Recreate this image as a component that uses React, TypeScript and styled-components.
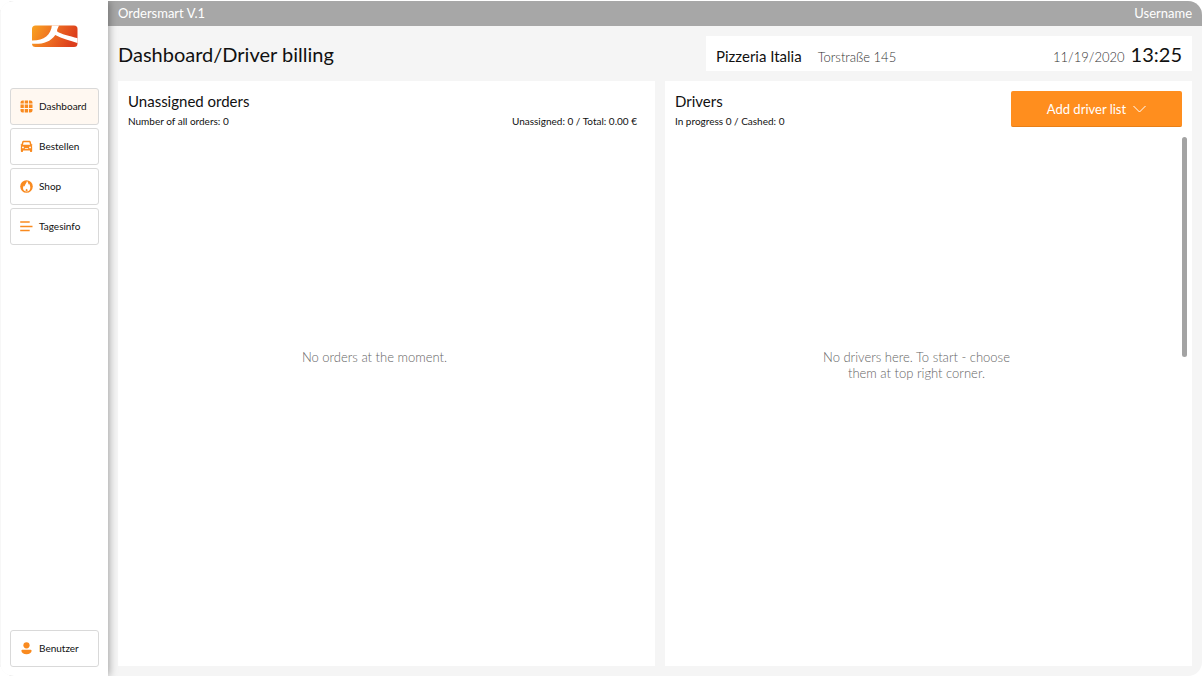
import React from "react";
import styled, { createGlobalStyle } from "styled-components";

const GlobalStyle = createGlobalStyle`
  * { box-sizing: border-box; }
  html, body, #root { height: 100%; }
  body {
    margin: 0;
    background: #fff;
    color: #111;
    font-family: Lato, "Liberation Sans", sans-serif;
  }
  h1, h2, p { margin: 0; font-weight: 400; }
  button { font: inherit; cursor: pointer; }
`;

const Shell = styled.div`
  display: flex;
  min-height: calc(100vh - 2px);
  margin: 1px 0;
  border-radius: 14px;
  overflow: hidden;
  background: #f5f5f5;
`;

const Sidebar = styled.aside`
  display: flex;
  flex-direction: column;
  flex: 0 0 108px;
  padding: 24px 9px 9px;
  background: #fff;
  border-left: 1px solid #f7f7f7;
  box-shadow: 1px 0 8px rgba(0, 0, 0, 0.36);
  z-index: 1;
`;

const Logo = styled.svg`
  display: block;
  align-self: center;
  width: 46px;
  height: 23px;
  margin-bottom: 40px;
`;

const Menu = styled.nav`
  display: flex;
  flex: 1;
  flex-direction: column;
  gap: 3px;
`;

const MenuButton = styled.button<{ $active?: boolean; $last?: boolean }>`
  display: flex;
  align-items: center;
  gap: 6px;
  width: 100%;
  height: 37px;
  margin-top: ${(p) => (p.$last ? "auto" : "0")};
  padding: 0 8px 0 9px;
  border: 1px solid #d9d9d9;
  border-radius: 3px;
  background: ${(p) => (p.$active ? "#fff8f1" : "#fff")};
  color: #111;
  font-size: 10px;
  line-height: 13px;
`;

const MenuIcon = styled.svg`
  flex: none;
  width: 13px;
  height: 13px;
  color: #f98a1f;
`;

const Main = styled.div`
  display: flex;
  flex: 1;
  flex-direction: column;
  min-width: 0;
`;

const TopBar = styled.header`
  display: flex;
  align-items: center;
  justify-content: space-between;
  height: 25px;
  padding: 0 10px;
  background: #a7a7a7;
  color: #fff;
  font-size: 13px;
  line-height: 15px;
`;

const Content = styled.main`
  display: flex;
  flex: 1;
  flex-direction: column;
  gap: 10px;
  padding: 10px;
`;

const Heading = styled.div`
  display: grid;
  grid-template-columns: 588fr 486fr;
  align-items: center;
`;

const Title = styled.h1`
  font-size: 20px;
  line-height: 24px;
`;

const StoreCard = styled.div`
  display: flex;
  align-items: baseline;
  height: 35px;
  padding: 5px 10px;
  background: #fff;
  line-height: 26px;
`;

const StoreName = styled.span`
  margin-right: 16px;
  font-size: 15px;
`;

const Muted = styled.span`
  color: #333;
  font-size: 13px;
  font-weight: 300;
`;

const Clock = styled.time`
  margin-left: 6px;
  font-size: 20px;
`;

const DateText = styled(Muted).attrs({ as: "time" })`
  margin-left: auto;
`;

const Panels = styled.div`
  display: grid;
  flex: 1;
  grid-template-columns: 537fr 527fr;
  gap: 10px;
`;

const Panel = styled.section`
  display: flex;
  flex-direction: column;
  padding: 10px;
  background: #fff;
`;

const PanelHead = styled.div`
  display: flex;
  align-items: flex-start;
  justify-content: space-between;
  height: 46px;
`;

const PanelTitle = styled.h2`
  font-size: 15px;
  line-height: 20px;
`;

const Small = styled.p`
  font-size: 10px;
  line-height: 20px;
`;

const Totals = styled(Small)`
  padding: 20px 8px 0 0;
`;

const AddButton = styled.button`
  display: flex;
  align-items: center;
  justify-content: center;
  gap: 7px;
  width: 171px;
  height: 36px;
  padding: 0;
  border: 0;
  border-bottom: 1px solid #e87f17;
  border-radius: 2px;
  background: #ff8e1e;
  color: #fff;
  font-size: 13px;
  line-height: 16px;
`;

const Chevron = styled.svg`
  width: 13px;
  height: 8px;
`;

const PanelBody = styled.div`
  display: flex;
  flex: 1;
`;

const Empty = styled.div`
  display: flex;
  flex: 1;
  justify-content: center;
  padding: 212px 24px 0 0;
`;

const EmptyText = styled.p`
  max-width: 200px;
  color: #666;
  font-size: 13px;
  font-weight: 300;
  line-height: 16px;
  text-align: center;
`;

const ScrollThumb = styled.div`
  flex: none;
  width: 5px;
  height: 220px;
  margin-right: -5px;
  border-radius: 3px;
  background: #a3a3a3;
`;

const GridIcon = () => (
  <MenuIcon viewBox="0.500 0.500 13 13" fill="currentColor" aria-hidden="true">
    <path d="M3 1h1.300v3H1V3a2 2 0 0 1 2-2zM5.200 1h3.400v3H5.200zM9.500 1H11a2 2 0 0 1 2 2v1H9.500zM1 5h3.300v3.600H1zM5.200 5h3.400v3.600H5.200zM9.500 5H13v3.600H9.500zM1 9.600h3.300V13H3a2 2 0 0 1-2-2zM5.200 9.600h3.400V13H5.200zM9.500 9.600H13V11a2 2 0 0 1-2 2H9.500z" />
  </MenuIcon>
);

const CarIcon = () => (
  <MenuIcon viewBox="0 0 14 14" fill="currentColor" aria-hidden="true">
    <path
      fillRule="evenodd"
      d="M4 .9h6c.9 0 1.500.5 1.700 1.300l.6 2.500h.9v1.200h-.5c.3.500.4 1 .4 1.700v4.500c0 .5-.3.800-.8.800h-.8c-.5 0-.8-.3-.8-.8v-.9H3.300v.9c0 .5-.3.800-.8.800h-.8c-.5 0-.8-.3-.8-.8V7.600c0-.7.100-1.200.4-1.700H.8V4.700h.9l.6-2.500C2.500 1.400 3.100.9 4 .9zM3.900 2.500 3.200 5h7.600l-.7-2.500zM3.200 7a1 1 0 1 0 0 2 1 1 0 0 0 0-2zM10.800 7a1 1 0 1 0 0 2 1 1 0 0 0 0-2zM5.200 8.900v.8h3.600v-.8z"
    />
  </MenuIcon>
);

const FlameIcon = () => (
  <MenuIcon viewBox="0.500 0.500 13 13" aria-hidden="true">
    <circle cx="7" cy="7" r="6.300" fill="currentColor" />
    <path
      fill="#fff"
      d="M7.400 1.600c1 1.100 1.600 2.200 1.500 3.500.4-.1.600-.4.700-.8.900 1.300 1.200 2.600 1.200 3.900 0 2.300-1.500 3.900-3.700 3.900S3.500 10.700 3.500 8.600c0-1.100.4-2 1-2.700.1.500.3.800.7 1C5.200 4.700 7.300 4 7.400 1.600z"
    />
    <path fill="currentColor" d="M7.200 9.300c.6.500.9.900.9 1.400 0 .6-.4 1-1 1s-1-.4-1-.9c0-.6.6-.8 1.100-1.500z" />
  </MenuIcon>
);

const LinesIcon = () => (
  <MenuIcon viewBox="0.500 0.500 13 13" fill="none" stroke="currentColor" strokeWidth="1.300" aria-hidden="true">
    <path d="M.700 2.500h9.500M.700 7h12.300M.700 11h9.500" />
  </MenuIcon>
);

const UserIcon = () => (
  <MenuIcon viewBox="0.500 0.500 13 13" fill="currentColor" aria-hidden="true">
    <circle cx="7" cy="3.800" r="3.100" />
    <path d="M3.200 8.300h7.600c.9 0 1.400.5 1.300 1.300-.2 2-2.200 3.200-5.100 3.200S2.100 11.600 1.900 9.600c-.1-.8.400-1.300 1.300-1.300z" />
  </MenuIcon>
);

export default function App() {
  return (
    <>
      <GlobalStyle />
      <Shell>
        <Sidebar>
          <Logo viewBox="0 0 46 23" role="img" aria-label="Ordersmart">
            <defs>
              <linearGradient id="brand" x1="0" y1="0" x2="1" y2="0.250">
                <stop offset="0" stopColor="#f9a420" />
                <stop offset="0.500" stopColor="#ee6f22" />
                <stop offset="1" stopColor="#dc3e1c" />
              </linearGradient>
              <clipPath id="tile">
                <rect x="0" y="0.500" width="45.500" height="21.500" rx="3.500" />
              </clipPath>
            </defs>
            <g clipPath="url(#tile)">
              <rect width="46" height="23" fill="url(#brand)" />
              <path
                fill="#fff"
                d="M-1 15.500C12 16 19.500 10 20-1h7.500c-1 3.500-3 5.500-2.300 7.500C29 9 37 11 46 13.200v5C38 15.500 30 14 23.300 10 18 17.500 10 19.500-1 18.700z"
              />
            </g>
          </Logo>
          <Menu aria-label="Main">
            <MenuButton $active aria-current="page"><GridIcon />Dashboard</MenuButton>
            <MenuButton><CarIcon />Bestellen</MenuButton>
            <MenuButton><FlameIcon />Shop</MenuButton>
            <MenuButton><LinesIcon />Tagesinfo</MenuButton>
            <MenuButton $last><UserIcon />Benutzer</MenuButton>
          </Menu>
        </Sidebar>
        <Main>
          <TopBar>
            <span>Ordersmart V.1</span>
            <span>Username</span>
          </TopBar>
          <Content>
            <Heading>
              <Title>Dashboard/Driver billing</Title>
              <StoreCard>
                <StoreName>Pizzeria Italia</StoreName>
                <Muted>Torstraße 145</Muted>
                <DateText>11/19/2020</DateText>
                <Clock>13:25</Clock>
              </StoreCard>
            </Heading>
            <Panels>
              <Panel>
                <PanelHead>
                  <div>
                    <PanelTitle>Unassigned orders</PanelTitle>
                    <Small>Number of all orders: 0</Small>
                  </div>
                  <Totals>Unassigned: 0 / Total: 0.00 €</Totals>
                </PanelHead>
                <PanelBody>
                  <Empty>
                    <EmptyText>No orders at the moment.</EmptyText>
                  </Empty>
                </PanelBody>
              </Panel>
              <Panel>
                <PanelHead>
                  <div>
                    <PanelTitle>Drivers</PanelTitle>
                    <Small>In progress 0 / Cashed: 0</Small>
                  </div>
                  <AddButton>
                    Add driver list
                    <Chevron viewBox="0 0 13 8" fill="none" stroke="currentColor" aria-hidden="true">
                      <path d="M0.500 1 6.500 7 12.500 1" />
                    </Chevron>
                  </AddButton>
                </PanelHead>
                <PanelBody>
                  <Empty>
                    <EmptyText>No drivers here. To start - choose them at top right corner.</EmptyText>
                  </Empty>
                  <ScrollThumb />
                </PanelBody>
              </Panel>
            </Panels>
          </Content>
        </Main>
      </Shell>
    </>
  );
}
